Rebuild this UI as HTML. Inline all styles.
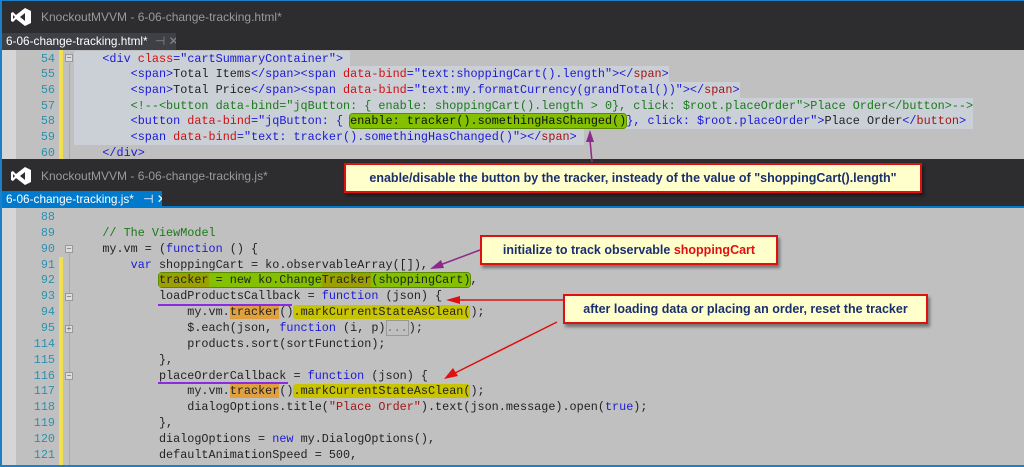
<!DOCTYPE html>
<html><head><meta charset="utf-8"><style>
*{margin:0;padding:0;box-sizing:border-box}
body{width:1024px;height:467px;overflow:hidden;background:#2d2d30;position:relative;font-family:"Liberation Mono",monospace;font-size:11.8px}
.abs{position:absolute}
.title{position:absolute;left:0;width:1024px;height:32px;background:#2d2d30;color:#9a9a9a;font-family:"Liberation Sans",sans-serif;font-size:12px}
.title span{position:absolute;left:39px;top:9px}
.tab{position:absolute;left:2px;height:17px;color:#fff;font-family:"Liberation Sans",sans-serif;font-size:11.8px;padding:1px 0 0 4px;white-space:nowrap;overflow:hidden}
.ed{position:absolute;left:2px;width:1022px;background:#c0c0c0;overflow:hidden}
.gut{position:absolute;left:0;top:0;bottom:0;width:14px;background:#d6d6d6}
.ln{position:absolute;left:0;width:1022px;height:16px;white-space:pre;color:#222;line-height:16px}
.ln .n{position:absolute;left:0;width:53px;text-align:right;color:#2b91af}
.ln .c{position:absolute;left:72px}
.chg{position:absolute;left:57px;width:4px;background:#f0e050}
.fold{position:absolute;left:63px;width:8px;height:8px;border:1px solid #999;background:#ddd;font-size:8px;line-height:6px;text-align:center;color:#555;font-family:"Liberation Sans",sans-serif}
.fl{position:absolute;left:67px;width:1px;background:#aaa}
.b{color:#1a1ad8}.r{color:#d01010}.m{color:#a31515}.g{color:#1a7a1a}.k{color:#1a1ad8}.s{color:#a31515}
.sel{background:#cbcfd6}
.hg{background:#82c000;border-radius:3px;box-shadow:0 0 0 1px #5a8a00}
.ho{background:#e0a040}
.hy{background:#c8c400;border-radius:3px}
.hog{background:#9aa000}
.box{position:absolute;background:#ffffcc;border:2px solid #e01010;box-shadow:2px 3px 3px rgba(0,0,0,.4);color:#1a2f6e;font-family:"Liberation Sans",sans-serif;font-weight:bold;font-size:12.5px;display:flex;align-items:center;justify-content:center;white-space:nowrap}
</style></head><body>
<!-- window 1 -->
<div class="abs" style="left:0;top:0;width:1024px;height:160px;border-top:1px solid #1c80c8;border-left:2px solid #1c80c8"></div>
<div class="title" style="top:1px;left:2px"><svg class="abs" style="left:8px;top:6px" width="22" height="20" viewBox="0 0 22 20"><path d="M15 1 L21 4 L21 16 L15 19 L6 12 L3 15 L1 14 L1 6 L3 5 L6 8 Z M15 6 L10 10 L15 14 Z M3 8 L3 12 L5 10 Z" fill="#fff" fill-rule="evenodd"/></svg><span>KnockoutMVVM - 6-06-change-tracking.html*</span></div>
<div class="tab" style="top:33px;width:174px;background:#3f3f46">6-06-change-tracking.html* <span style="color:#888;margin-left:4px">⊣ ✕</span></div>
<div class="ed" style="top:50px;height:109px">
<div class="gut"></div>
<div class="chg" style="top:0;height:109px"></div>
<div class="fl" style="top:13px;height:96px"></div>
<div class="fold" style="top:4px">−</div>
<div class="ln" style="top:0.5px"><span class="n">54</span><span class="c sel">    <span class="b">&lt;div</span> <span class="r">class</span><span class="b">="cartSummaryContainer"&gt;</span> </span></div>
<div class="ln" style="top:16.2px"><span class="n">55</span><span class="c sel">        <span class="b">&lt;span&gt;</span>Total Items<span class="b">&lt;/span&gt;&lt;span</span> <span class="r">data-bind</span><span class="b">="text:shoppingCart().length"&gt;&lt;/</span><span class="m">span</span><span class="b">&gt;</span></span></div>
<div class="ln" style="top:31.8px"><span class="n">56</span><span class="c sel">        <span class="b">&lt;span&gt;</span>Total Price<span class="b">&lt;/span&gt;&lt;span</span> <span class="r">data-bind</span><span class="b">="text:my.formatCurrency(grandTotal())"&gt;&lt;/</span><span class="m">span</span><span class="b">&gt;</span></span></div>
<div class="ln" style="top:47.5px"><span class="n">57</span><span class="c sel">        <span class="g">&lt;!--&lt;button data-bind="jqButton: { enable: shoppingCart().length &gt; 0}, click: $root.placeOrder"&gt;Place Order&lt;/button&gt;--&gt;</span></span></div>
<div class="ln" style="top:63.2px"><span class="n">58</span><span class="c sel">        <span class="b">&lt;button</span> <span class="r">data-bind</span><span class="b">="jqButton: { <span class="hg" style="color:#111">enable: tracker().somethingHasChanged()</span>}, click: $root.placeOrder"&gt;</span>Place Order<span class="b">&lt;/</span><span class="m">button</span><span class="b">&gt;</span> </span></div>
<div class="ln" style="top:78.8px"><span class="n">59</span><span class="c sel">        <span class="b">&lt;span</span> <span class="r">data-bind</span><span class="b">="text: tracker().somethingHasChanged()"&gt;&lt;/</span><span class="m">span</span><span class="b">&gt;</span> </span></div>
<div class="ln" style="top:94.5px"><span class="n">60</span><span class="c">    <span class="b">&lt;/div&gt;</span></span></div>
</div>
<!-- window 2 -->
<div class="abs" style="left:0;top:160px;width:1024px;height:307px;border-left:2px solid #1c80c8;border-bottom:2px solid #1c80c8"></div>
<div class="title" style="top:160px;left:2px;width:1022px"><svg class="abs" style="left:8px;top:6px" width="22" height="20" viewBox="0 0 22 20"><path d="M15 1 L21 4 L21 16 L15 19 L6 12 L3 15 L1 14 L1 6 L3 5 L6 8 Z M15 6 L10 10 L15 14 Z M3 8 L3 12 L5 10 Z" fill="#fff" fill-rule="evenodd"/></svg><span>KnockoutMVVM - 6-06-change-tracking.js*</span></div>
<div class="tab" style="top:191px;width:160px;background:#007acc">6-06-change-tracking.js* <span style="margin-left:6px">⊣ ✕</span></div>
<div class="abs" style="left:2px;top:206px;width:1022px;height:2px;background:#007acc"></div>
<div class="ed" style="top:208px;height:257px">
<div class="gut"></div>
<div class="chg" style="top:49px;height:208px"></div>
<div class="fl" style="top:44px;height:213px"></div>
<div class="fold" style="top:37px">−</div>
<div class="fold" style="top:85px">−</div>
<div class="fold" style="top:117px">+</div>
<div class="fold" style="top:164px">−</div>
<div class="ln" style="top:1px"><span class="n">88</span><span class="c"></span></div>
<div class="ln" style="top:16.9px"><span class="n">89</span><span class="c">    <span class="g">// The ViewModel</span></span></div>
<div class="ln" style="top:32.7px"><span class="n">90</span><span class="c">    my.vm = (<span class="k">function</span> () {</span></div>
<div class="ln" style="top:48.6px"><span class="n">91</span><span class="c">        <span class="k">var</span> shoppingCart = ko.observableArray([]),</span></div>
<div class="ln" style="top:64.4px"><span class="n">92</span><span class="c">            <span class="hg"><span class="hog">tracker</span> = new ko.Change<span class="hog">Tracker</span>(shoppingCart)</span>,</span></div>
<div class="ln" style="top:80.3px"><span class="n">93</span><span class="c">            loadProductsCallback = <span class="k">function</span> (json) {</span></div>
<div class="ln" style="top:96.1px"><span class="n">94</span><span class="c">                my.vm.<span class="ho">tracker</span>()<span class="hy">.markCurrentStateAsClean(</span>);</span></div>
<div class="ln" style="top:112px"><span class="n">95</span><span class="c">                $.each(json, <span class="k">function</span> (i, p)<span style="border:1px solid #999;color:#777">...</span>);</span></div>
<div class="ln" style="top:127.8px"><span class="n">114</span><span class="c">                products.sort(sortFunction);</span></div>
<div class="ln" style="top:143.7px"><span class="n">115</span><span class="c">            },</span></div>
<div class="ln" style="top:159.5px"><span class="n">116</span><span class="c">            placeOrderCallback = <span class="k">function</span> (json) {</span></div>
<div class="ln" style="top:175.4px"><span class="n">117</span><span class="c">                my.vm.<span class="ho">tracker</span>()<span class="hy">.markCurrentStateAsClean(</span>);</span></div>
<div class="ln" style="top:191.2px"><span class="n">118</span><span class="c">                dialogOptions.title(<span class="s">"Place Order"</span>).text(json.message).open(<span class="k">true</span>);</span></div>
<div class="ln" style="top:207.1px"><span class="n">119</span><span class="c">            },</span></div>
<div class="ln" style="top:222.9px"><span class="n">120</span><span class="c">            dialogOptions = <span class="k">new</span> my.DialogOptions(),</span></div>
<div class="ln" style="top:238.8px"><span class="n">121</span><span class="c">            defaultAnimationSpeed = 500,</span></div>
<div class="abs" style="left:156px;top:96px;width:134px;height:2px;background:#8a2be2"></div>
<div class="abs" style="left:156px;top:174px;width:130px;height:2px;background:#8a2be2"></div>
</div>
<!-- callouts -->
<div class="box" style="left:344px;top:163px;width:578px;height:30px">enable/disable the button by the tracker, insteady of the value of "shoppingCart().length"</div>
<div class="box" style="left:480px;top:235px;width:298px;height:30px">initialize to track observable&nbsp;<span style="color:#e01010">shoppingCart</span></div>
<div class="box" style="left:563px;top:294px;width:365px;height:30px">after loading data or placing an order, reset the tracker</div>
<svg class="abs" style="left:0;top:0" width="1024" height="467">
<line x1="592" y1="162" x2="590" y2="140" stroke="#8b2a8b" stroke-width="1.5"/><polygon points="590,130 586,142 594,142" fill="#8b2a8b"/>
<line x1="480" y1="250" x2="440" y2="265" stroke="#8b2a8b" stroke-width="1.5"/><polygon points="430,269 441,260 444,268" fill="#8b2a8b"/>
<line x1="563" y1="300" x2="458" y2="300" stroke="#e01010" stroke-width="1.5"/><polygon points="446,300 460,296 460,304" fill="#e01010"/>
<line x1="557" y1="322" x2="455" y2="373" stroke="#e01010" stroke-width="1.5"/><polygon points="444,379 453,368 458,376" fill="#e01010"/>
</svg>
</body></html>
